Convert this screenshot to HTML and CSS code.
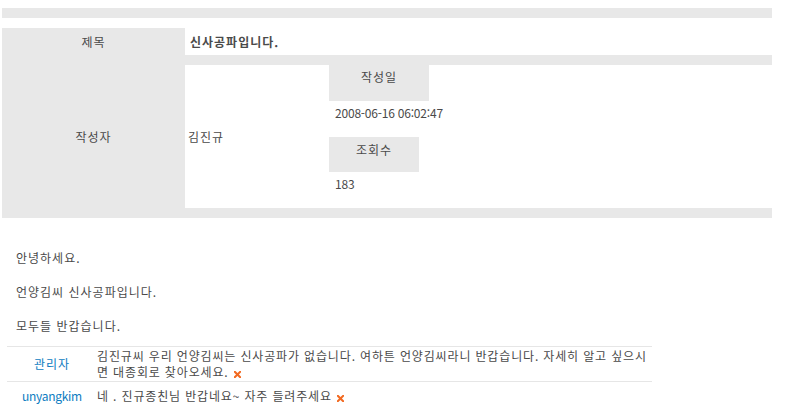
FILE: index.html
```html
<!DOCTYPE html>
<html lang="ko">
<head>
<meta charset="utf-8">
<title>신사공파입니다.</title>
<link rel="stylesheet" href="styles.css">
</head>
<body>
<div class="page">
  <div class="topbar"></div>

  <div class="post">
    <div class="label label-title">제목</div>
    <div class="title-cell">신사공파입니다.</div>
    <div class="label label-author">작성자</div>
    <div class="author-wrap">
      <div class="author-cell">
        <div class="author-name">김진규</div>
        <div class="meta">
          <div class="meta-head meta-head-date">작성일</div>
          <div class="meta-val">2008-06-16 06:02:47</div>
          <div class="meta-head meta-head-hit">조회수</div>
          <div class="meta-val">183</div>
        </div>
      </div>
    </div>
  </div>

  <div class="content">
    <p>안녕하세요.</p>
    <p>언양김씨 신사공파입니다.</p>
    <p>모두들 반갑습니다.</p>
  </div>

  <div class="comments">
    <div class="comment">
      <div class="c-name">관리자</div>
      <div class="c-text">김진규씨 우리 언양김씨는 신사공파가 없습니다. 여하튼 언양김씨라니 반갑습니다. 자세히 알고 싶으시면 대종회로 찾아오세요.<svg class="del" width="7" height="7" viewBox="0 0 7 7"><path d="M0.8 0.8 L6.2 6.2 M6.2 0.8 L0.8 6.2" stroke="#f26a21" stroke-width="2" stroke-linecap="square"/></svg></div>
    </div>
    <div class="comment">
      <div class="c-name c-name-latin">unyangkim</div>
      <div class="c-text">네 . 진규종친님 반갑네요~ 자주 들려주세요<svg class="del" width="7" height="7" viewBox="0 0 7 7"><path d="M0.8 0.8 L6.2 6.2 M6.2 0.8 L0.8 6.2" stroke="#f26a21" stroke-width="2" stroke-linecap="square"/></svg></div>
    </div>
  </div>
</div>
</body>
</html>
```

FILE: styles.css
```css
html, body {
  margin: 0;
  padding: 0;
  background: #fff;
}
body {
  font-family: "Noto Sans CJK KR", "Noto Sans", sans-serif;
  font-size: 12px;
  line-height: 16px;
  color: #4a4a4a;
  letter-spacing: 1px;
}
.page {
  padding: 8px 0 0 2px;
}
.topbar {
  width: 770px;
  height: 10px;
  background: #e8e8e8;
}
.post {
  margin-top: 10px;
  width: 770px;
  display: grid;
  grid-template-columns: 183px 587px;
  grid-template-rows: 27px auto;
  background: #e8e8e8;
}
.label {
  display: flex;
  align-items: center;
  justify-content: center;
}
.title-cell {
  background: #fff;
  font-weight: bold;
  padding-left: 5px;
  display: flex;
  align-items: center;
}
.author-wrap {
  padding: 10px 0;
}
.author-cell {
  background: #fff;
  display: flex;
}
.author-name {
  width: 141px;
  padding-left: 3px;
  display: flex;
  align-items: center;
}
.meta {
  display: flex;
  flex-direction: column;
  align-items: flex-start;
}
.meta-head {
  background: #e8e8e8;
  text-align: center;
  box-sizing: border-box;
  padding-top: 4px;
}
.meta-head-date {
  width: 100px;
  height: 36px;
}
.meta-head-hit {
  width: 90px;
  height: 35px;
  padding-top: 5px;
}
.meta-val {
  height: 36px;
  box-sizing: border-box;
  padding: 4px 0 0 6px;
  letter-spacing: -0.2px;
}
.content {
  padding: 32px 0 0 14px;
}
.content p {
  margin: 0 0 18px;
}
.content p:last-child {
  margin-bottom: 12px;
}
.comments {
  margin-left: 5px;
  width: 645px;
}
.comment {
  display: flex;
  align-items: center;
  min-height: 26px;
  border-top: 1px solid #e6e6e6;
  padding: 1px 0;
}
.c-name {
  width: 90px;
  flex: none;
  text-align: center;
  color: #0d7cc1;
}
.c-name-latin {
  letter-spacing: -0.3px;
}
.c-text {
  flex: 1;
  letter-spacing: 0.85px;
}
.del {
  display: inline-block;
  margin-left: 5px;
  vertical-align: -1px;
}
```
